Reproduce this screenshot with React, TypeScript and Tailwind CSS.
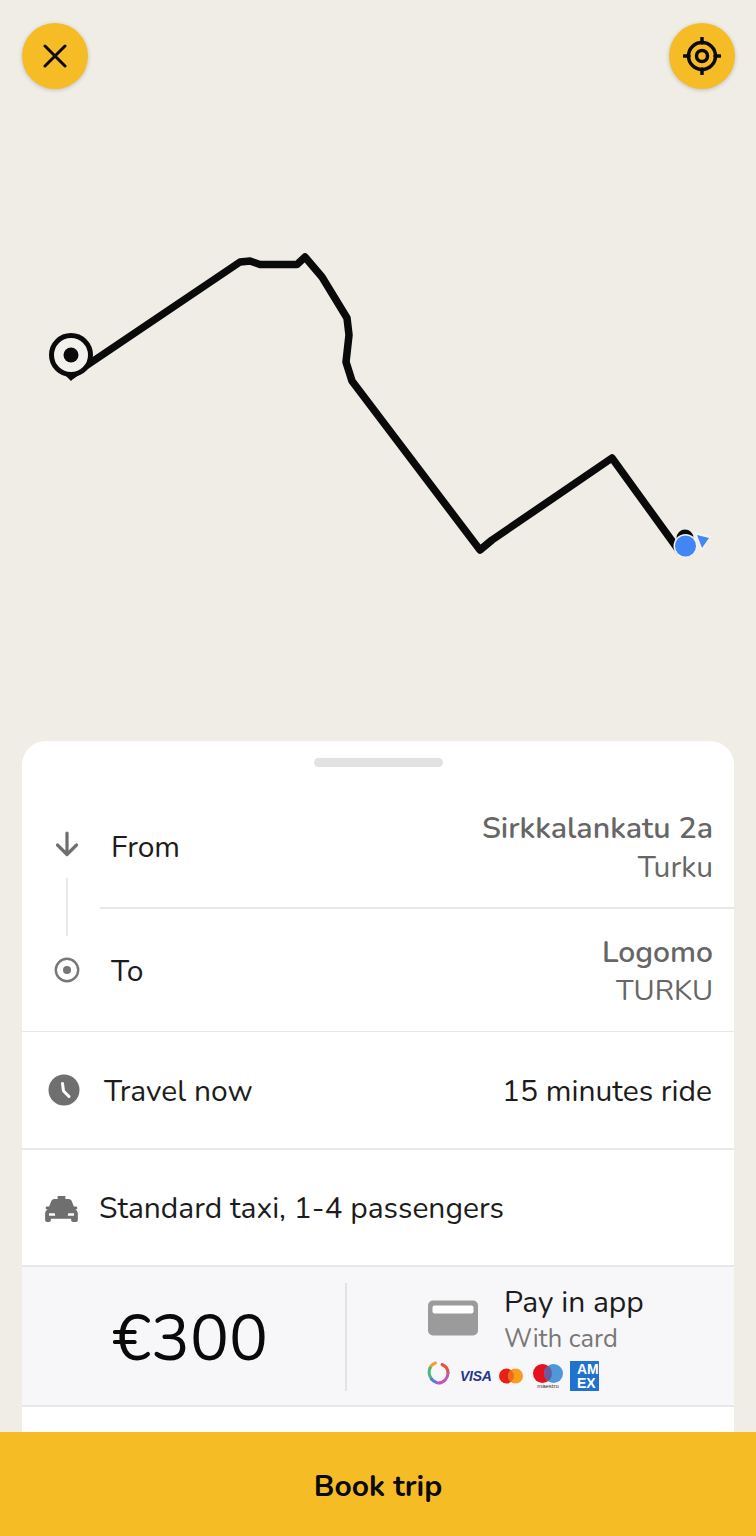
import React from "react";

const font = { fontFamily: "Nunito, Lato, 'Open Sans', sans-serif" };

function Row({ className = "", children }: { className?: string; children: React.ReactNode }) {
  return <div className={`flex items-center ${className}`}>{children}</div>;
}

function Clock() {
  return (
    <svg width="32" height="32" viewBox="0 0 32 32">
      <circle cx="16" cy="16" r="15.500" fill="#6f6f6f" />
      <path d="M14.500 9.500 L15.500 17 L21 22.500" fill="none" stroke="#fff" strokeWidth="3" strokeLinecap="round" strokeLinejoin="round" />
    </svg>
  );
}

function Taxi() {
  return (
    <svg width="33" height="26" viewBox="0 0 34 27" className="ml-[1px]">
      <path fill="#6f6f6f" d="M13 0h8v3h3.500c1.400 0 2.500.8 3 2l2.300 6H32a1.400 1.400 0 0 1 0 3h-.6c1.600 1 2.600 2.600 2.600 4.500V25a2 2 0 0 1-2 2h-3a2 2 0 0 1-2-2v-1.500H6V25a2 2 0 0 1-2 2H2a2 2 0 0 1-2-2v-6.500C0 16.600 1 15 2.600 14H2a1.400 1.400 0 0 1 0-3h2.200l2.300-6c.5-1.200 1.600-2 3-2H13z" />
      <path fill="#fff" d="M4 18h6l.5 2.500H4zM30 18h-6l-.5 2.500H30z" />
    </svg>
  );
}

function PaymentLogos() {
  return (
    <div className="flex items-center h-[30px] mt-[4px] -ml-[1px]">
      <svg width="23" height="24" viewBox="0 0 23 24" className="mr-[10px] -mt-[7px]">
        <path d="M8.500 2C6 2.800 4 4.500 3 7" fill="none" stroke="#e8a33a" strokeWidth="3" strokeLinecap="round" />
        <path d="M3 7C1.500 11 2 15 4.500 18" fill="none" stroke="#49b97c" strokeWidth="3" strokeLinecap="round" />
        <path d="M4.500 18C5.800 19.700 7.500 20.800 9.500 21.500" fill="none" stroke="#5b7bd6" strokeWidth="3" strokeLinecap="round" />
        <path d="M15 3.500C18.500 5 21 8.500 21 12" fill="none" stroke="#e8503f" strokeWidth="3" strokeLinecap="round" />
        <path d="M21 12C21 17 17 22 11 22" fill="none" stroke="#c557b8" strokeWidth="3" strokeLinecap="round" />
      </svg>
      <span className="w-[30px] mr-[9px] text-[14px] leading-none font-bold italic text-[#25358e] tracking-[-0.3px]" style={{ fontFamily: "'Liberation Sans', sans-serif" }}>VISA</span>
      <svg width="24" height="16" viewBox="0 0 24 16" className="mr-[10px]">
        <circle cx="7.500" cy="8" r="7.500" fill="#e8201a" />
        <circle cx="16.500" cy="8" r="7.500" fill="#f59e1e" />
        <path d="M12 2a7.500 7.500 0 0 1 0 12 7.500 7.500 0 0 1 0-12z" fill="#f4691a" />
      </svg>
      <div className="flex flex-col items-center w-[30px] mr-[7px]">
        <svg width="30" height="19" viewBox="0 0 30 19">
          <circle cx="9.500" cy="9.500" r="9.500" fill="#e5121d" />
          <circle cx="20.500" cy="9.500" r="9.500" fill="#4f97d8" />
          <path d="M15 1.800a9.500 9.500 0 0 1 0 15.400 9.500 9.500 0 0 1 0-15.400z" fill="#6c5a9c" />
        </svg>
        <span className="text-[6px] leading-[6px] text-[#333]" style={{ fontFamily: "'Liberation Sans', sans-serif" }}>maestro</span>
      </div>
      <div className="w-[29px] h-[30px] bg-[#1f72cd] text-white text-[14px] leading-[14px] font-bold pt-[1px] pl-[7px] whitespace-nowrap" style={{ fontFamily: "'Liberation Sans', sans-serif" }}>
        <div>AM</div>
        <div>EX</div>
      </div>
    </div>
  );
}

export default function App() {
  return (
    <div className="relative h-[1536px] w-[756px] overflow-hidden bg-[#f0ede6]" style={font}>
      <svg width="756" height="741" viewBox="0 0 756 741" className="block">
        <path
          d="M71 376 L240 262 L250 261 L260 264.500 L297 264.500 L305 257 L322 277 L347 318 L349 335 L346 362 L352 381 L480 550 L492 540 L612 458 L680 552"
          fill="none"
          stroke="#0a0a0a"
          strokeWidth="7.500"
          strokeLinejoin="round"
        />
        <path d="M64 374 L71 381 L78 374 Z" fill="#0a0a0a" />
        <circle cx="71" cy="355" r="19.500" fill="#f2f1ee" stroke="#0a0a0a" strokeWidth="5" />
        <circle cx="71" cy="355" r="7.500" fill="#0a0a0a" />
        <circle cx="685" cy="538" r="8.500" fill="#0a0a0a" />
        <path d="M694 532 L711 536 L702 551 Z" fill="#f4f4f4" />
        <path d="M697 535 L709 538 L702 548 Z" fill="#4285f4" />
        <circle cx="685.500" cy="546" r="12" fill="#eef2f8" />
        <circle cx="685.500" cy="546" r="10.500" fill="#4285f4" />
      </svg>

      <button className="absolute left-[22px] top-[23px] w-[66px] h-[66px] rounded-full bg-[#f6bc26] shadow-[0_1px_4px_rgba(0,0,0,0.2)] flex items-center justify-center">
        <svg width="24" height="24" viewBox="0 0 24 24" fill="none" stroke="#0a0a0a" strokeWidth="3" strokeLinecap="round">
          <path d="M2 2 L22 22 M22 2 L2 22" />
        </svg>
      </button>
      <button className="absolute left-[669px] top-[23px] w-[66px] h-[66px] rounded-full bg-[#f6bc26] shadow-[0_1px_4px_rgba(0,0,0,0.2)] flex items-center justify-center">
        <svg width="38" height="38" viewBox="0 0 38 38" fill="none" stroke="#0a0a0a">
          <circle cx="19" cy="19" r="13.500" strokeWidth="3.500" />
          <circle cx="19" cy="19" r="5.500" strokeWidth="3.500" />
          <path d="M19 1v5M19 32v5M1 19h5M32 19h5" strokeWidth="3.500" strokeLinecap="round" />
        </svg>
      </button>

      <div className="mx-[22px] h-[795px] rounded-t-[24px] bg-white flex flex-col">
        <div className="h-[49px] pt-[17px] flex justify-center shrink-0">
          <div className="w-[129px] h-[9px] rounded-full bg-[#e2e2e2]" />
        </div>

        <div className="relative shrink-0">
          <Row className="h-[117px] pb-[2px] pl-[89px] pr-[21px] justify-between text-[30px]">
            <span className="text-[#1c1c1c]">From</span>
            <div className="text-right leading-[39px] text-[#666]">
              <div className="font-semibold text-[30.400px]">Sirkkalankatu 2a</div>
              <div>Turku</div>
            </div>
          </Row>
          <div className="ml-[78px] h-[2px] bg-[#e8e8e8]" />
          <Row className="h-[122px] pt-[4px] pl-[89px] pr-[21px] justify-between text-[30px]">
            <span className="text-[#1c1c1c] -mt-[2px]">To</span>
            <div className="text-right leading-[38px] text-[#666]">
              <div className="font-semibold">Logomo</div>
              <div className="text-[29px]">TURKU</div>
            </div>
          </Row>
          <svg width="28" height="28" viewBox="0 0 28 28" className="absolute left-[31px] top-[40px]" fill="none" stroke="#6f6f6f" strokeWidth="3.200" strokeLinecap="round" strokeLinejoin="round">
            <path d="M14 3V24M4.500 15 14 24.500 23.500 15" />
          </svg>
          <div className="absolute left-[44px] top-[88px] w-[2px] h-[58px] bg-[#e8e8e8]" />
          <svg width="26" height="26" viewBox="0 0 26 26" className="absolute left-[32px] top-[167px]">
            <circle cx="13" cy="13" r="11.200" fill="none" stroke="#777" strokeWidth="2.400" />
            <circle cx="13" cy="13" r="4" fill="#777" />
          </svg>
        </div>

        <div className="h-[1px] bg-[#e8e8e8] shrink-0" />
        <Row className="h-[116px] pt-[2px] pl-[26px] pr-[22px] justify-between text-[30px] shrink-0">
          <div className="flex items-center gap-[24px]">
            <div className="-mt-[3px]"><Clock /></div>
            <span className="text-[#1c1c1c]">Travel now</span>
          </div>
          <span className="text-[#1c1c1c]">15 minutes ride</span>
        </Row>
        <div className="h-[2px] bg-[#e8e8e8] shrink-0" />
        <Row className="h-[115px] pt-[2px] pl-[22px] gap-[21px] text-[30px] shrink-0">
          <Taxi />
          <span className="text-[#1c1c1c]">Standard taxi, 1-4 passengers</span>
        </Row>
        <div className="h-[2px] bg-[#e8e8e8] shrink-0" />
        <div className="h-[138px] bg-[#f7f7f9] flex items-center shrink-0">
          <div className="w-[323px] pl-[13px] pt-[4px] flex justify-center text-[65px] leading-none text-[#0a0a0a]">€300</div>
          <div className="w-[2px] h-[108px] mt-[2px] bg-[#e2e2e2]" />
          <div className="pl-[81px] pt-[4px] flex flex-col">
            <div className="flex items-center">
              <svg width="50" height="36" viewBox="0 0 50 36" className="mr-[26px] -mt-[7px]">
                <rect width="50" height="35" y="0.500" rx="5" fill="#9b9b9b" />
                <rect x="4.500" y="5.500" width="41" height="8" rx="2" fill="#fff" />
              </svg>
              <div>
                <div className="text-[30px] leading-[36px] text-[#1c1c1c]">Pay in app</div>
                <div className="text-[25.500px] leading-[36px] text-[#777]">With card</div>
              </div>
            </div>
            <PaymentLogos />
          </div>
        </div>
        <div className="h-[2px] bg-[#e8e8e8] shrink-0" />
      </div>

      <button className="absolute left-0 top-[1432px] w-[756px] h-[104px] pt-[4px] bg-[#f6bc26] text-[30px] font-bold text-[#0a0a0a]">Book trip</button>
    </div>
  );
}
